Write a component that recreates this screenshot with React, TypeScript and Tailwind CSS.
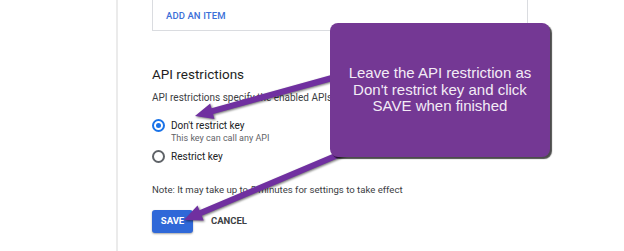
import * as React from "react"

function Arrows() {
	return (
		<svg
			className="absolute inset-0 h-[251px] w-[624px] [filter:drop-shadow(1.5px_1.5px_1px_rgba(0,0,0,0.55))]"
			viewBox="0 0 624 251"
		>
			<polygon
				fill="#7030a0"
				points="331.2,75.1 211.5,108.3 210.2,103.5 195,116 214.4,118.9 213.1,114.1 332.8,80.9"
			/>
			<polygon
				fill="#7030a0"
				points="343.8,149.2 199.4,210.2 197.5,205.6 184,220 203.7,220.4 201.8,215.8 346.2,154.8"
			/>
		</svg>
	)
}

function Radio({ checked }: { checked?: boolean }) {
	return (
		<span
			className={
				checked
					? "flex h-[13px] w-[13px] shrink-0 items-center justify-center rounded-full border-2 border-[#1a73e8]"
					: "flex h-[13px] w-[13px] shrink-0 items-center justify-center rounded-full border-2 border-[#5f6368]"
			}
		>
			{checked && <span className="h-[5px] w-[5px] rounded-full bg-[#1a73e8]" />}
		</span>
	)
}

export default function App() {
	return (
		<div className="relative h-[251px] w-[624px] overflow-hidden bg-white font-['Roboto',sans-serif] text-[#202124]">
			<div className="flex h-full">
				<div className="w-[116px] shrink-0" />
				<div className="h-full border-l-2 border-[#ebebeb] pl-[34px]">
					<div className="flex h-[31px] w-[376px] items-center border border-t-0 border-[#dadce0] pl-[13px] pt-[3px]">
						<span className="text-[9.5px] font-medium tracking-[0.1px] text-[#3b6fd8]">
							ADD AN ITEM
						</span>
					</div>

					<h2 className="mt-[33px] text-[13.5px] leading-[20px] text-[#1f1f1f]">
						API restrictions
					</h2>
					<p className="mt-[6px] text-[10px] leading-[16px] text-[#3c4043]">
						API restrictions specify the enabled APIs that this key can call
					</p>

					<div className="mt-[13px] flex items-center gap-[6px]">
						<Radio checked />
						<span className="text-[10px] leading-[12px]">Don't restrict key</span>
					</div>
					<p className="pl-[19px] text-[9px] leading-[12px] text-[#5f6368]">
						This key can call any API
					</p>
					<div className="mt-[6px] flex items-center gap-[6px]">
						<Radio />
						<span className="text-[10px] leading-[12px]">Restrict key</span>
					</div>

					<p className="mt-[21px] text-[9.6px] leading-[12px] text-[#3c4043]">
						Note: It may take up to 5 minutes for settings to take effect
					</p>

					<div className="mt-[14px] flex items-center gap-[18px]">
						<button className="h-[23px] w-[41px] rounded-[3px] bg-[#2f68d8] text-[9.5px] font-bold text-white shadow-[0_1px_2px_rgba(0,0,0,0.35)]">
							SAVE
						</button>
						<button className="text-[9.5px] font-bold text-[#3c4043]">CANCEL</button>
					</div>
				</div>
			</div>

			<Arrows />

			<div className="absolute left-[330px] top-[23px] flex h-[134px] w-[220px] items-center justify-center rounded-[8px] bg-[#743894] shadow-[2px_2px_1px_rgba(0,0,0,0.7)]">
				<p className="text-center font-['Liberation_Sans',Arial,sans-serif] text-[15px] leading-[16.5px] text-[#f3ecf6]">
					Leave the API restriction as
					<br />
					Don't restrict key and click
					<br />
					SAVE when finished
				</p>
			</div>
		</div>
	)
}
